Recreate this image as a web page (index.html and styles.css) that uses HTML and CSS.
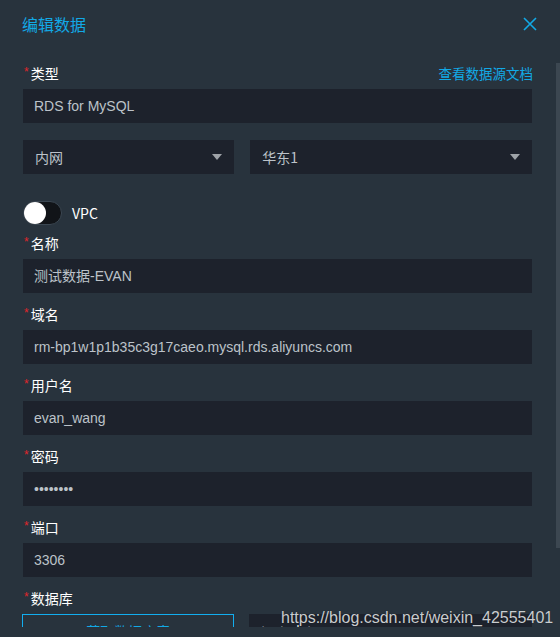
FILE: index.html
```html
<!DOCTYPE html>
<html lang="zh-CN">
<head>
<meta charset="utf-8">
<title>编辑数据</title>
<link rel="stylesheet" href="styles.css">
</head>
<body>
<div class="modal">
  <div class="header">
    <span class="title">编辑数据</span>
    <button class="close" aria-label="关闭">
      <svg width="14" height="14" viewBox="0 0 14 14"><path d="M1 1 L13 13 M13 1 L1 13" stroke="#12a9e6" stroke-width="1.6" fill="none"/></svg>
    </button>
  </div>
  <div class="body">
    <div class="label-row">
      <span class="label"><span class="req">*</span>类型</span>
      <a class="link">查看数据源文档</a>
    </div>
    <div class="input">RDS for MySQL</div>

    <div class="pair selects">
      <div class="select"><span>内网</span><i class="caret"></i></div>
      <div class="select"><span>华东1</span><i class="caret"></i></div>
    </div>

    <div class="switch-row">
      <span class="switch"><span class="knob"></span></span>
      <span class="switch-label">VPC</span>
    </div>

    <div class="field first">
      <div class="label-row"><span class="label"><span class="req">*</span>名称</span></div>
      <div class="input">测试数据-EVAN</div>
    </div>
    <div class="field">
      <div class="label-row"><span class="label"><span class="req">*</span>域名</span></div>
      <div class="input">rm-bp1w1p1b35c3g17caeo.mysql.rds.aliyuncs.com</div>
    </div>
    <div class="field">
      <div class="label-row"><span class="label"><span class="req">*</span>用户名</span></div>
      <div class="input">evan_wang</div>
    </div>
    <div class="field">
      <div class="label-row"><span class="label"><span class="req">*</span>密码</span></div>
      <div class="input">••••••••</div>
    </div>
    <div class="field">
      <div class="label-row"><span class="label"><span class="req">*</span>端口</span></div>
      <div class="input">3306</div>
    </div>
    <div class="field">
      <div class="label-row"><span class="label"><span class="req">*</span>数据库</span></div>
      <div class="pair">
        <button class="fetch">获取数据库表</button>
        <div class="input db">test_data</div>
      </div>
    </div>
  </div>
  <div class="scroll-thumb"></div>
  <div class="watermark">https://blog.csdn.net/weixin_42555401</div>
</div>
</body>
</html>
```
FILE: styles.css
```css
html, body {
  margin: 0;
  padding: 0;
  background: #28333d;
}
body {
  width: 560px;
  height: 637px;
  overflow: hidden;
  font-family: "Noto Sans CJK SC", "Liberation Sans", sans-serif;
}
.modal {
  position: relative;
  width: 560px;
  height: 637px;
  background: #28333d;
}
.header {
  height: 63px;
  box-sizing: border-box;
  padding: 13px 23px 0 22px;
  display: flex;
  justify-content: space-between;
  align-items: flex-start;
}
.title {
  font-size: 16px;
  line-height: 22px;
  color: #12a9e6;
}
.close {
  margin-top: 4px;
  padding: 0;
  border: 0;
  background: none;
  width: 14px;
  height: 14px;
  display: block;
}
.close svg { display: block; }
.body {
  height: 564px;
  overflow: hidden;
  box-sizing: border-box;
  padding: 0 28px 0 23px;
}
.label-row {
  height: 20px;
  display: flex;
  justify-content: space-between;
  align-items: center;
  margin-bottom: 6px;
}
.label {
  font-size: 14px;
  line-height: 20px;
  color: #ffffff;
}
.req {
  display: inline-block;
  vertical-align: top;
  font-family: "Liberation Sans", sans-serif;
  font-size: 12px;
  line-height: 12px;
  margin: 3px 2px 0 1px;
  color: #e0262b;
}
.link {
  font-size: 13.5px;
  line-height: 20px;
  color: #12a9e6;
  margin-right: -1px;
}
.input {
  height: 34px;
  line-height: 34px;
  box-sizing: border-box;
  padding: 0 11px;
  background: #1d222c;
  color: #bcc2c9;
  font-family: "Liberation Sans", "Noto Sans CJK SC", sans-serif;
  font-size: 14px;
  white-space: nowrap;
  overflow: hidden;
}
.pair {
  display: grid;
  grid-template-columns: 3fr 4fr;
  column-gap: 16px;
}
.selects {
  margin-top: 17px;
}
.select {
  height: 34px;
  background: #1d222c;
  display: flex;
  align-items: center;
  justify-content: space-between;
  padding: 0 12px 0 12px;
  color: #bcc2c9;
  font-size: 14px;
}
.select span { line-height: 20px; }
.caret {
  width: 0;
  height: 0;
  border-left: 5px solid transparent;
  border-right: 5px solid transparent;
  border-top: 6px solid #9ea3a8;
}
.switch-row {
  margin-top: 27px;
  height: 24px;
  display: flex;
  align-items: center;
  gap: 10px;
}
.switch {
  width: 39px;
  height: 24px;
  box-sizing: border-box;
  border-radius: 12px;
  background: #111418;
  border: 1px solid #3b4752;
  display: flex;
  align-items: center;
  padding-left: 0;
}
.knob {
  width: 22px;
  height: 22px;
  border-radius: 50%;
  background: #ffffff;
}
.switch-label {
  color: #ffffff;
  font-size: 14px;
  line-height: 20px;
}
.field { margin-top: 11px; }
.field.first { margin-top: 8px; }
.fetch {
  height: 34px;
  margin-left: -1px;
  border: 1px solid #12aef0;
  background: transparent;
  color: #12a9e6;
  font-family: "Noto Sans CJK SC", sans-serif;
  font-size: 14px;
  padding: 0;
}
.input.db {
  margin-left: -1px;
  color: #e6e8ea;
  padding-left: 12px;
}
.scroll-thumb {
  position: absolute;
  right: 0;
  top: 63px;
  width: 4px;
  height: 485px;
  background: #3c4751;
}
.watermark {
  position: absolute;
  left: 281px;
  top: 609px;
  font-family: "Liberation Sans", sans-serif;
  font-size: 16px;
  line-height: 18px;
  color: #c9cccf;
  text-shadow: 0 0 1px rgba(0, 0, 0, 0.4);
  white-space: nowrap;
}
```
